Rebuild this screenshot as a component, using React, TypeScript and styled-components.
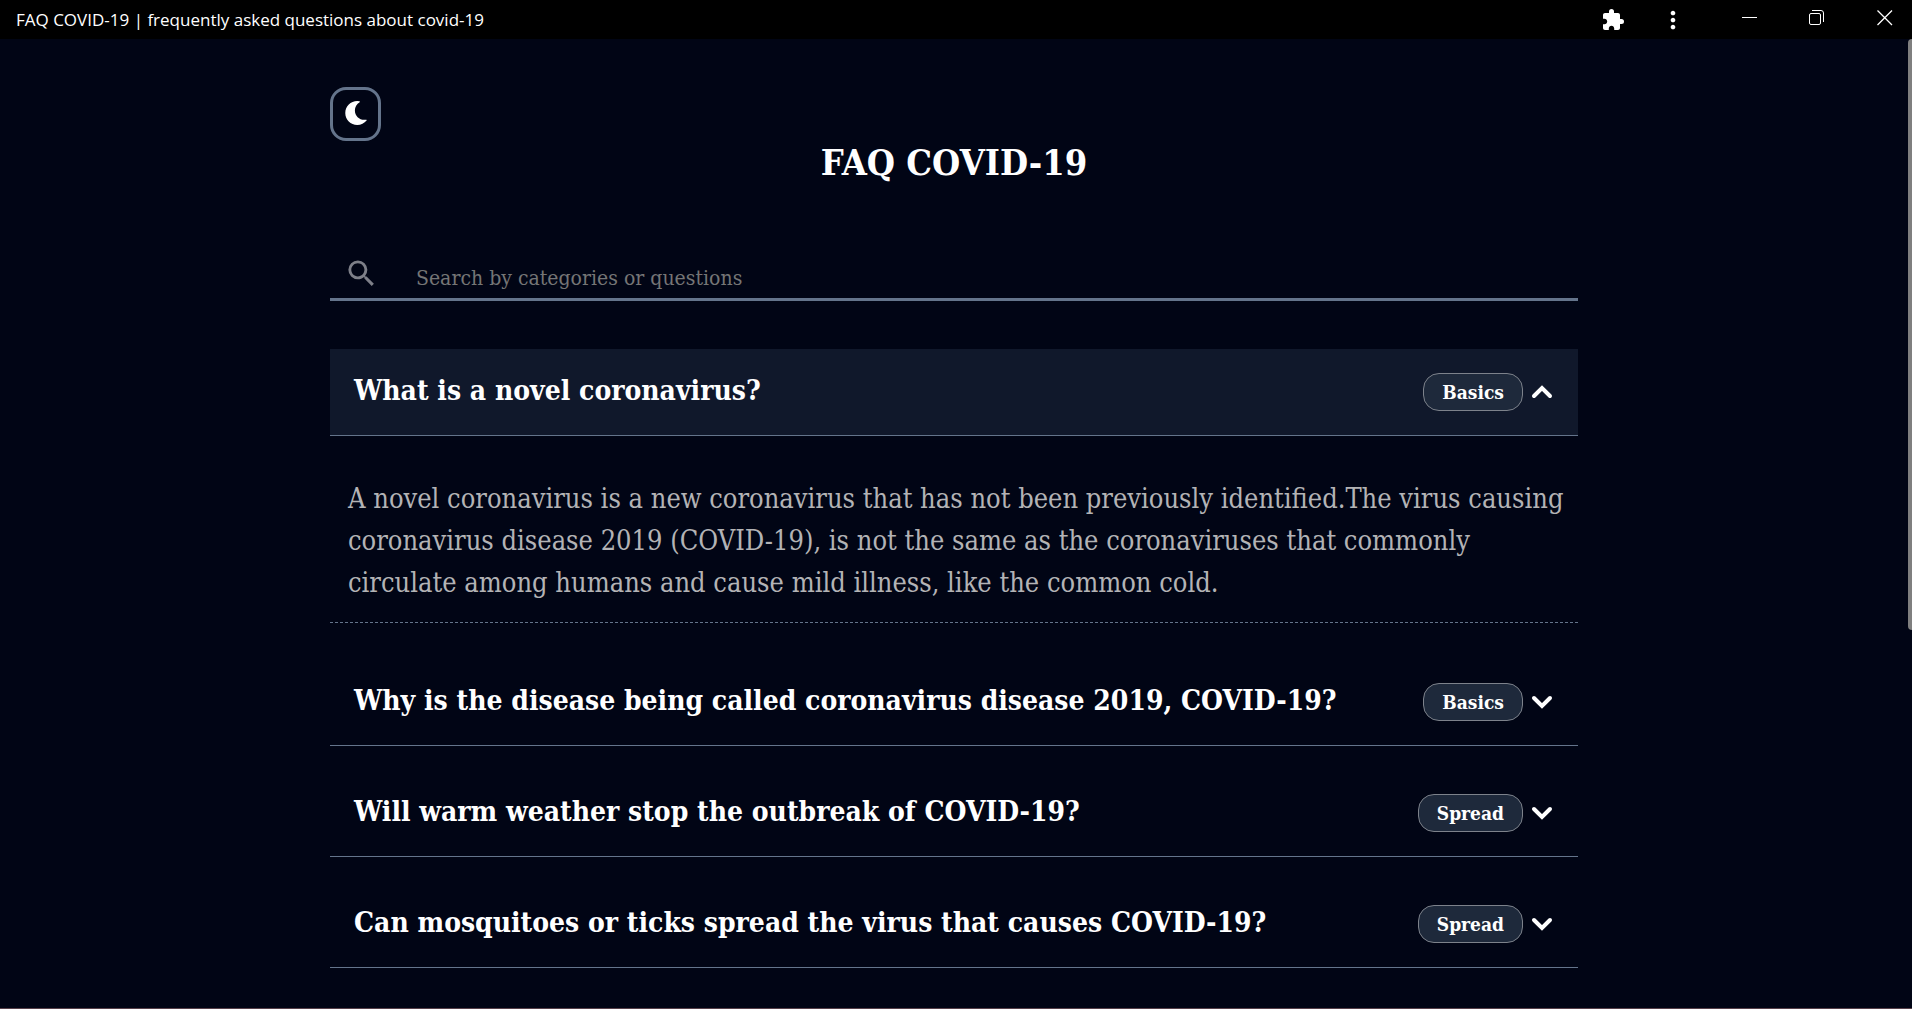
import React, { useState } from "react";
import styled, { createGlobalStyle } from "styled-components";
import { FaMoon } from "react-icons/fa";
import { MdExtension, MdMoreVert, MdSearch } from "react-icons/md";

const serif = '"DejaVu Serif Condensed", "DejaVu Serif", serif';

const GlobalStyle = createGlobalStyle`
  * { box-sizing: border-box; }
  body { margin: 0; background: #010515; color: #fff; font-family: ${serif}; }
  button, input { font: inherit; color: inherit; }
  h1, h2, p { margin: 0; }
`;

const Window = styled.div`
  min-height: 100vh;
  display: flex;
  flex-direction: column;
  border-bottom: 2px solid #57414a;
`;

const TitleBar = styled.header`
  display: flex;
  align-items: center;
  justify-content: space-between;
  height: 39px;
  padding: 0 3px 0 16px;
  background: #000;
  font: 17px/24px "Open Sans", "Noto Sans", sans-serif;
`;

const Controls = styled.div`
  display: flex;
  gap: 28px;
`;

const ControlGroup = styled.div<{ $gap: number }>`
  display: flex;
  gap: ${(p) => p.$gap}px;
`;

const ControlButton = styled.button`
  display: flex;
  align-items: center;
  justify-content: center;
  width: 48px;
  height: 39px;
  padding: 0;
  border: 0;
  background: none;
`;

const WindowButton = styled(ControlButton)`
  padding-bottom: 4px;
`;

const Viewport = styled.div`
  flex: 1;
  display: flex;
`;

const Page = styled.main`
  flex: 1;
  padding: 48px 24px 40px;
`;

const Content = styled.div`
  max-width: 1248px;
  margin: 0 auto;
`;

const Track = styled.div`
  width: 4px;
`;

const Thumb = styled.div`
  height: 61%;
  border-radius: 4px 0 0 4px;
  background: #7f7f7f;
`;

const ThemeButton = styled.button`
  display: flex;
  align-items: center;
  justify-content: center;
  width: 51px;
  height: 54px;
  padding: 0 0 2px;
  border: 3px solid #64748b;
  border-radius: 16px;
  background: none;
`;

const Heading = styled.h1`
  font-size: 36px;
  line-height: 42px;
  text-align: center;
`;

const SearchBox = styled.label`
  display: flex;
  align-items: center;
  gap: 37px;
  height: 52px;
  margin: 66px 0 48px;
  padding-left: 14px;
  border-bottom: 3px solid #64748b;
  color: #7d7f88;
`;

const SearchInput = styled.input`
  flex: 1;
  padding: 8px 0 0;
  border: 0;
  outline: 0;
  background: none;
  font-size: 21px;
  line-height: 32px;
  &::placeholder { color: #757575; opacity: 1; }
`;

const List = styled.div`
  display: flex;
  flex-direction: column;
  gap: 24px;
`;

const Question = styled.button<{ $open: boolean }>`
  display: flex;
  align-items: flex-start;
  width: 100%;
  min-height: 87px;
  padding: 22px 24px;
  border: 0;
  border-bottom: 1px solid #64748b;
  background: ${(p) => (p.$open ? "#10182b" : "none")};
  text-align: left;
`;

const QuestionText = styled.span`
  flex: 1;
  font-size: 28px;
  font-weight: 700;
  line-height: 40px;
`;

const Meta = styled.span`
  display: flex;
  align-items: center;
  gap: 7px;
  padding-top: 2px;
`;

const Badge = styled.span`
  padding: 0 18px;
  border: 1px solid #7d828b;
  border-radius: 16px;
  background: #1e293b;
  font-size: 19px;
  font-weight: 700;
  line-height: 36px;
`;

const Answer = styled.p`
  margin-bottom: 12px;
  padding: 42px 12px 18px 18px;
  border-bottom: 1px dashed #64748b;
  color: #b3b3b5;
  font-size: 27px;
  line-height: 42px;
`;

const Chevron = ({ up }: { up: boolean }) => (
  <svg width="24" height="24" viewBox="0 0 24 24" fill="none" stroke="currentColor" strokeWidth="4" strokeLinecap="round">
    <path d={up ? "M4 16 L12 8 L20 16" : "M4 8 L12 16 L20 8"} />
  </svg>
);

const faqs = [
  {
    question: "What is a novel coronavirus?",
    category: "Basics",
    answer:
      "A novel coronavirus is a new coronavirus that has not been previously identified.The virus causing coronavirus disease 2019 (COVID-19), is not the same as the coronaviruses that commonly circulate among humans and cause mild illness, like the common cold.",
  },
  { question: "Why is the disease being called coronavirus disease 2019, COVID-19?", category: "Basics" },
  { question: "Will warm weather stop the outbreak of COVID-19?", category: "Spread" },
  { question: "Can mosquitoes or ticks spread the virus that causes COVID-19?", category: "Spread" },
];

export default function App() {
  const [open, setOpen] = useState(0);
  return (
    <Window>
      <GlobalStyle />
      <TitleBar>
        <span>FAQ COVID-19 | frequently asked questions about covid-19</span>
        <Controls>
          <ControlGroup $gap={12}>
            <ControlButton aria-label="Extensions"><MdExtension size={24} /></ControlButton>
            <ControlButton aria-label="More"><MdMoreVert size={28} /></ControlButton>
          </ControlGroup>
          <ControlGroup $gap={20}>
            <WindowButton aria-label="Minimize">
              <svg width="15" height="16" stroke="currentColor"><path d="M0 7.500H15" /></svg>
            </WindowButton>
            <WindowButton aria-label="Restore">
              <svg width="16" height="16" fill="none" stroke="currentColor">
                <rect x="0.500" y="3.500" width="11" height="11" rx="1.500" />
                <path d="M3 .5H12A2.500 2.500 0 0 1 14.500 3V12" />
              </svg>
            </WindowButton>
            <WindowButton aria-label="Close">
              <svg width="16" height="16" stroke="currentColor" strokeWidth="1.300"><path d="M.5 .5L15 15M15 .5L.5 15" /></svg>
            </WindowButton>
          </ControlGroup>
        </Controls>
      </TitleBar>
      <Viewport>
        <Page>
          <Content>
            <ThemeButton aria-label="Toggle theme"><FaMoon size={24} /></ThemeButton>
            <Heading>FAQ COVID-19</Heading>
            <SearchBox>
              <MdSearch size={35} />
              <SearchInput type="text" aria-label="Search" placeholder="Search by categories or questions" />
            </SearchBox>
            <List>
              {faqs.map((faq, i) => (
                <div key={faq.question}>
                  <Question $open={open === i} aria-expanded={open === i} onClick={() => setOpen(open === i ? -1 : i)}>
                    <QuestionText>{faq.question}</QuestionText>
                    <Meta>
                      <Badge>{faq.category}</Badge>
                      <Chevron up={open === i} />
                    </Meta>
                  </Question>
                  {open === i && faq.answer && <Answer>{faq.answer}</Answer>}
                </div>
              ))}
            </List>
          </Content>
        </Page>
        <Track><Thumb /></Track>
      </Viewport>
    </Window>
  );
}
